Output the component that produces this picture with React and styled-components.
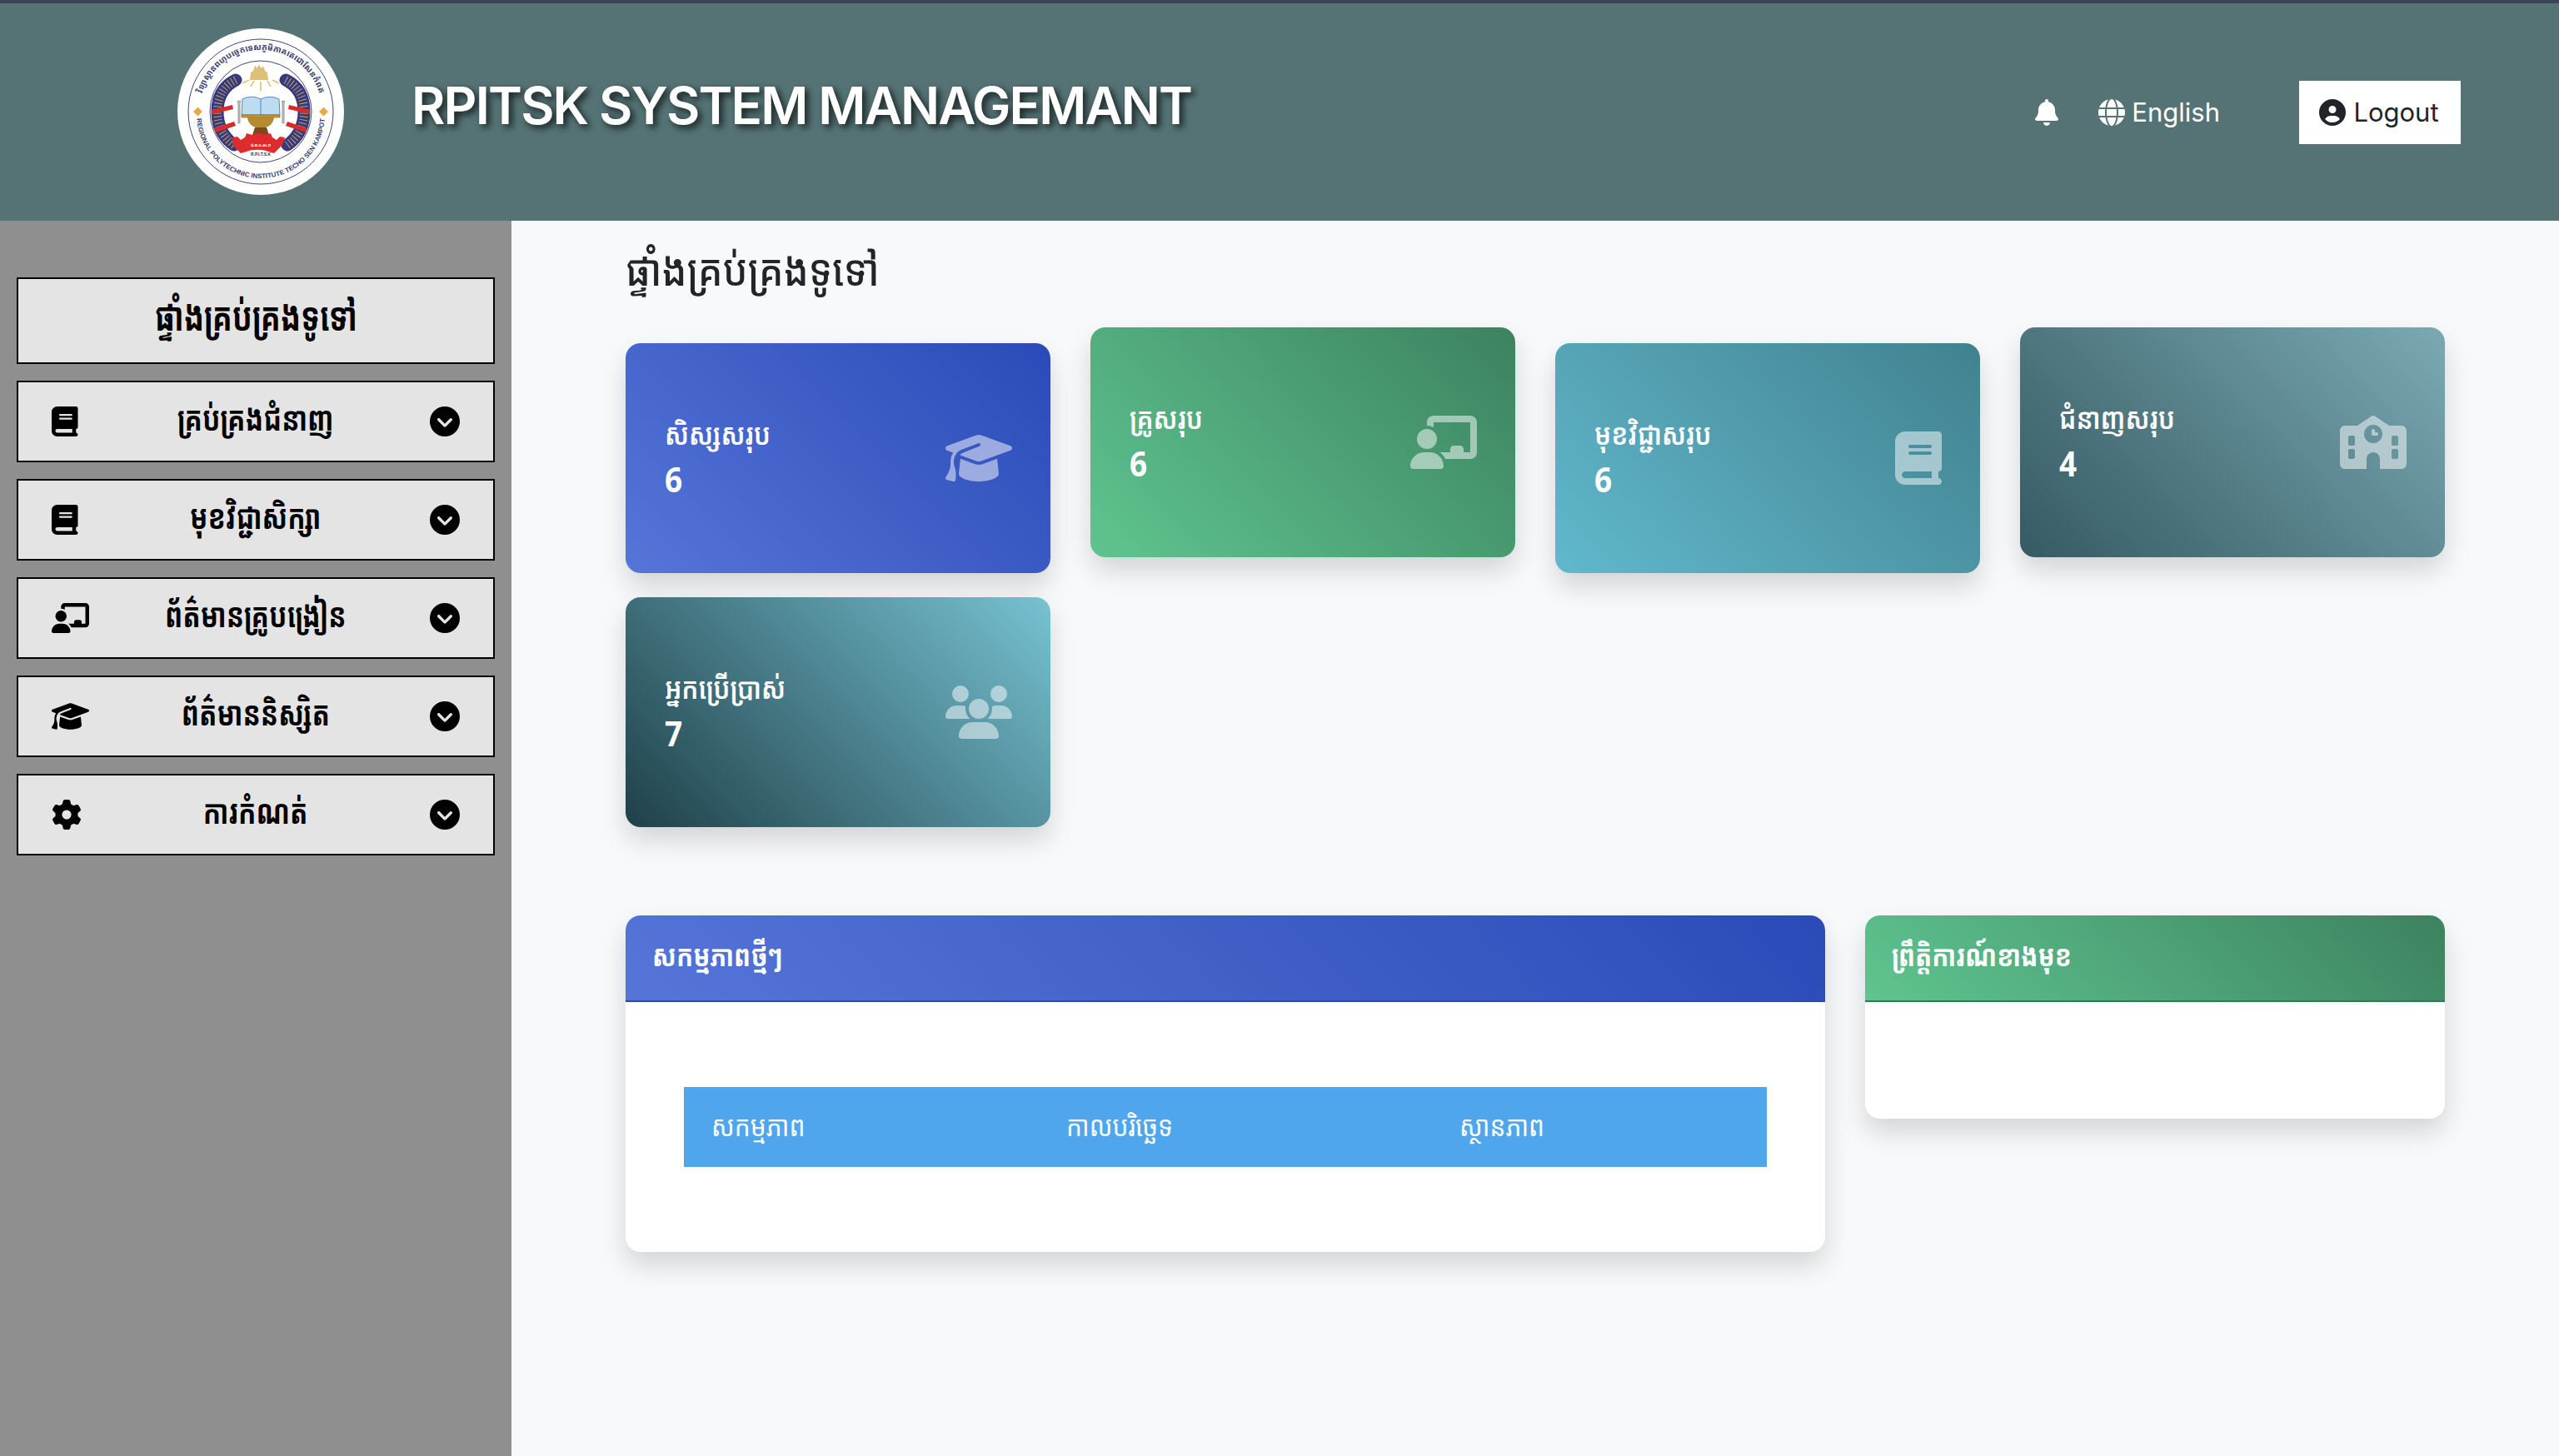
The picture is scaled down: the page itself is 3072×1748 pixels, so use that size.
import React from "react";
import styled, { createGlobalStyle, css } from "styled-components";
import {
  FaBook, FaChalkboardUser, FaGraduationCap, FaGear, FaCircleChevronDown,
  FaBell, FaGlobe, FaCircleUser, FaSchool, FaUsers,
} from "react-icons/fa6";

const KH = `"Noto Sans Khmer", "Khmer OS", "Noto Sans", "Open Sans", sans-serif`;

const Global = createGlobalStyle`
  html, body { margin: 0; padding: 0; background: #f8f9fa; }
  * { box-sizing: border-box; }
  #root { min-height: 1748px; }
`;

const sized = (w) => css`display: block; height: 1em; width: ${w}em; flex: none;`;
const BookIcon = styled(FaBook)`${sized(0.875)}`;
const BoardIcon = styled(FaChalkboardUser)`${sized(1.25)}`;
const CapIcon = styled(FaGraduationCap)`${sized(1.25)}`;
const GearIcon = styled(FaGear)`${sized(1)}`;
const SchoolIcon = styled(FaSchool)`${sized(1.25)}`;
const UsersIcon = styled(FaUsers)`${sized(1.25)}`;
const ChevronIcon = styled(FaCircleChevronDown)`${sized(1)}`;
const BellIcon = styled(FaBell)`${sized(0.875)}`;
const GlobeIcon = styled(FaGlobe)`${sized(1)} font-size: 32px;`;
const UserIcon = styled(FaCircleUser)`${sized(1)} font-size: 32px;`;

const Page = styled.div`
  display: flex; flex-direction: column; width: 3072px; height: 1748px; overflow: hidden;
  font-family: Inter, "Noto Sans", sans-serif;
`;
const Header = styled.header`
  flex: 0 0 265px; display: flex; align-items: center; background: #557375;
  border-top: 4px solid #3b4556; padding: 0 118px 0 213px; color: #fff;
`;
const LogoWrap = styled.div`width: 200px; height: 200px; flex: none; margin-top: -2px;`;
const Brand = styled.h1`
  margin: 0 0 14px 81px; font-size: 62px; font-weight: 600; line-height: 1.2; white-space: nowrap;
  letter-spacing: -1.85px; text-shadow: 4px 4px 8px rgba(0,0,0,.75); flex: 1;
`;
const Tools = styled.div`display: flex; align-items: center;`;
const Bell = styled.span`display: flex; font-size: 32px; margin-right: 48px;`;
const Lang = styled.span`display: flex; align-items: center; gap: 8px; font-size: 31px; margin-right: 95px; color: #fff;`;
const Logout = styled.button`
  display: flex; align-items: center; justify-content: center; gap: 9px; width: 194px; height: 76px;
  background: #fff; border: 0; color: #212529; font: 400 31px Inter, sans-serif; padding: 0 2px 0 0;
`;
const Body = styled.div`flex: 1; display: flex; min-height: 0;`;
const Sidebar = styled.nav`
  flex: 0 0 614px; background: #8f8f8f; padding: 68px 20px 0; display: flex; flex-direction: column; gap: 20px;
`;
const NavHead = styled.div`
  height: 104px; background: #e5e4e5; border: 2px solid #000; display: flex; align-items: center; justify-content: center;
  color: #000;
`;
const NavHeadText = styled.span`
  display: inline-block; font: 700 48px/1 ${KH}; transform: translateY(-6px) scaleX(.74);
`;
const NavItem = styled.div`
  height: 98px; background: #e5e4e5; border: 2px solid #000; padding: 0 40px; color: #000;
  display: grid; grid-template-columns: 48px 1fr 48px; align-items: center; font-size: 36px;
`;
const NavIconEnd = styled.span`justify-self: end;`;
const NavLabel = styled.span`
  justify-self: center; display: inline-block; white-space: nowrap; font: 700 40px/1 ${KH};
  transform: translateY(-4px) scaleX(.79);
`;
const Main = styled.main`flex: 1; padding: 24px 137px 0; background: #f8f9fa;`;
const PageTitle = styled.h2`
  margin: 0 0 59px; font: 500 52px/64px ${KH}; color: #212529; height: 64px;
  transform: translateY(2px) scaleX(.89); transform-origin: left center; white-space: nowrap;
`;
const Cards = styled.div`
  display: grid; grid-template-columns: repeat(4, 510px); column-gap: 48px; row-gap: 29px;
`;
const Card = styled.div`
  height: 276px; border-radius: 18px; padding: 0 46px 0 47px; color: #fff; display: flex; align-items: center;
  justify-content: space-between; background: linear-gradient(45deg, ${p => p.$from}, ${p => p.$to});
  box-shadow: 0 16px 32px rgba(0,0,0,.15);
  transform: translateY(${p => (p.$raised ? "-19px" : "0")});
`;
const CardLabel = styled.div`
  font: 600 35px/50px ${KH}; white-space: nowrap; transform: scaleX(.87); transform-origin: left center;
`;
const CardValue = styled.div`
  font: 700 42px/58px "Open Sans", sans-serif; transform: scaleX(.88); transform-origin: left center;
`;
const CardIcon = styled.span`display: flex; font-size: 64px; color: rgba(255,255,255,.5);`;
const Panels = styled.div`display: flex; gap: 48px; margin-top: 106px; align-items: flex-start;`;
const Panel = styled.section`
  flex: 0 0 ${p => p.$w}px; background: #fff; border-radius: 18px; overflow: hidden;
  box-shadow: 0 16px 32px rgba(0,0,0,.15);
`;
const PanelHead = styled.div`
  height: 104px; padding: 0 32px; display: flex; align-items: center; color: #fff;
  background: linear-gradient(45deg, ${p => p.$from}, ${p => p.$to}); border-bottom: 2px solid ${p => p.$line};
`;
const PanelTitle = styled.span`
  display: inline-block; font: 700 35px/1 ${KH}; white-space: nowrap;
  transform: translateY(-4px) scaleX(.85); transform-origin: left center;
`;
const PanelBody = styled.div`padding: 70px;`;
const TableHead = styled.div`
  margin: 32px 0; height: 96px; background: #4fa6ec; color: #fff; display: grid;
  grid-template-columns: 426px 472px 402px; align-items: center; font: 400 34px/1 ${KH};
`;
const Th = styled.span`
  margin-left: 33px; white-space: nowrap; transform: translateY(-2px) scaleX(.88); transform-origin: left center;
`;

const Logo = () => (
  <svg viewBox="0 0 200 200" width="200" height="200">
    <defs>
      <path id="topArc" d="M 27 108 A 73.500 73.500 0 1 1 173 108" />
      <path id="botArc" d="M 23 103 A 77 77 0 0 0 177 103" />
    </defs>
    <circle cx="100" cy="100" r="100" fill="#fff" />
    <circle cx="100" cy="100" r="87" fill="none" stroke="#2a2f6e" strokeWidth="0.900" />
    <circle cx="100" cy="100" r="61" fill="none" stroke="#2a2f6e" strokeWidth="0.900" />
    <text fontSize="10" fontWeight="700" fill="#3a3c70" fontFamily={KH}>
      <textPath href="#topArc" startOffset="50%" textAnchor="middle">វិទ្យាស្ថានពហុបច្ចេកទេសភូមិភាគតេជោសែនកំពត</textPath>
    </text>
    <text fontSize="8" fontWeight="700" fill="#3a3c70" fontFamily="Liberation Sans, sans-serif">
      <textPath href="#botArc" startOffset="50%" textAnchor="middle">REGIONAL POLYTECHNIC INSTITUTE TECHO SEN KAMPOT</textPath>
    </text>
    <path d="M19 100l5.500-5.500 5.500 5.500-5.500 5.500zM170 100l5.500-5.500 5.500 5.500-5.500 5.500z" fill="#e5ac45" />
    <path d="M70 62C54 70 48 84 48 100s6 30 20 40" fill="none" stroke="#37397f" strokeWidth="15" strokeLinecap="round" />
    <path d="M130 62c16 8 22 22 22 38s-6 30-20 40" fill="none" stroke="#37397f" strokeWidth="15" strokeLinecap="round" />
    <path d="M70 62C54 70 48 84 48 100s6 30 20 40M130 62c16 8 22 22 22 38s-6 30-20 40" fill="none" stroke="#c7a65a" strokeWidth="10" strokeDasharray="1 3" />
    <path d="M41 98l25-6 1 5-26 6zM44 120l24-8 2 5-24 8zM159 98l-25-6-1 5 26 6zM156 120l-24-8-2 5 24 8z" fill="#d92a2a" />
    <path d="M87 62l1-9 3-2 2-6h1l1 3 3-4 3 4 2-3 2 6 3 2 1 9z" fill="#dcc078" />
    <path d="M100 64v11M92 63l-4 7M108 63l4 7M86 62l-8 4M114 62l8 4" stroke="#e0b040" strokeWidth="1.300" />
    <path d="M78 85c8-4 16-3 22 0 6-3 14-4 22 0l1 19H77z" fill="#bcdcf0" stroke="#3b6ea5" strokeWidth="0.800" />
    <path d="M100 85v19" stroke="#3b6ea5" strokeWidth="0.800" />
    <rect x="77" y="104" width="46" height="3" fill="#c89b35" stroke="#5b4315" strokeWidth="0.500" />
    <path d="M84 107h32c-1 7-5 11-11 12v9H95v-9c-6-1-10-5-11-12z" fill="#b88a2e" />
    <path d="M93 119h14l3 9H90z" fill="#7a4a1c" />
    <path d="M66 131l6-1 4 4 5-3 2-5 7 2 5-2 5 0 5 2 7-2 2 5 5 3 4-4 6 1-3 9-5 5-5 5-7-2c-6-3-20-3-26 0l-7 2-5-5-5-5z" fill="#dd2c2c" />
    <text x="100" y="142" textAnchor="middle" fontSize="5" fontWeight="700" fill="#fff" fontFamily={KH}>ជ.ព.ត.ស.ក</text>
    <text x="100" y="152.500" textAnchor="middle" fontSize="5" fontWeight="700" fill="#333" fontFamily="Liberation Sans, sans-serif">R.P.I.T.S.K</text>
    <path d="M72 87h4l-.8 4v23h-2.400V91zM125 87h4l-.8 4v23h-2.400V91z" fill="#b5b5b5" stroke="#777" strokeWidth="0.400" />
  </svg>
);

const menu = [
  [BookIcon, "គ្រប់គ្រងជំនាញ"],
  [BookIcon, "មុខវិជ្ជាសិក្សា"],
  [BoardIcon, "ព័ត៌មានគ្រូបង្រៀន"],
  [CapIcon, "ព័ត៌មាននិស្សិត"],
  [GearIcon, "ការកំណត់"],
];
const cards = [
  ["សិស្សសរុប", "6", CapIcon, "#5675d9", "#2a4bb7", false],
  ["គ្រូសរុប", "6", BoardIcon, "#5fc490", "#3c825f", true],
  ["មុខវិជ្ជាសរុប", "6", BookIcon, "#61b8cc", "#41818f", false],
  ["ជំនាញសរុប", "4", SchoolIcon, "#365a62", "#7aa9b4", true],
  ["អ្នកប្រើប្រាស់", "7", UsersIcon, "#1f4049", "#77c2d2", false],
];

export default function App() {
  return (
    <Page>
      <Global />
      <Header>
        <LogoWrap><Logo /></LogoWrap>
        <Brand>RPITSK SYSTEM MANAGEMANT</Brand>
        <Tools>
          <Bell><BellIcon /></Bell>
          <Lang><GlobeIcon />English</Lang>
          <Logout><UserIcon />Logout</Logout>
        </Tools>
      </Header>
      <Body>
        <Sidebar>
          <NavHead><NavHeadText>ផ្ទាំងគ្រប់គ្រងទូទៅ</NavHeadText></NavHead>
          {menu.map(([Icon, label]) => (
            <NavItem key={label}>
              <Icon />
              <NavLabel>{label}</NavLabel>
              <NavIconEnd><ChevronIcon /></NavIconEnd>
            </NavItem>
          ))}
        </Sidebar>
        <Main>
          <PageTitle>ផ្ទាំងគ្រប់គ្រងទូទៅ</PageTitle>
          <Cards>
            {cards.map(([label, value, Icon, from, to, raised]) => (
              <Card key={label} $from={from} $to={to} $raised={raised}>
                <div>
                  <CardLabel>{label}</CardLabel>
                  <CardValue>{value}</CardValue>
                </div>
                <CardIcon><Icon /></CardIcon>
              </Card>
            ))}
          </Cards>
          <Panels>
            <Panel $w={1440}>
              <PanelHead $from="#5675d9" $to="#2a4bb7" $line="#2f4a9f"><PanelTitle>សកម្មភាពថ្មីៗ</PanelTitle></PanelHead>
              <PanelBody>
                <TableHead>
                  <Th>សកម្មភាព</Th>
                  <Th>កាលបរិច្ឆេទ</Th>
                  <Th>ស្ថានភាព</Th>
                </TableHead>
              </PanelBody>
            </Panel>
            <Panel $w={696}>
              <PanelHead $from="#5fc490" $to="#3c825f" $line="#387553"><PanelTitle>ព្រឹត្តិការណ៍ខាងមុខ</PanelTitle></PanelHead>
              <PanelBody />
            </Panel>
          </Panels>
        </Main>
      </Body>
    </Page>
  );
}
